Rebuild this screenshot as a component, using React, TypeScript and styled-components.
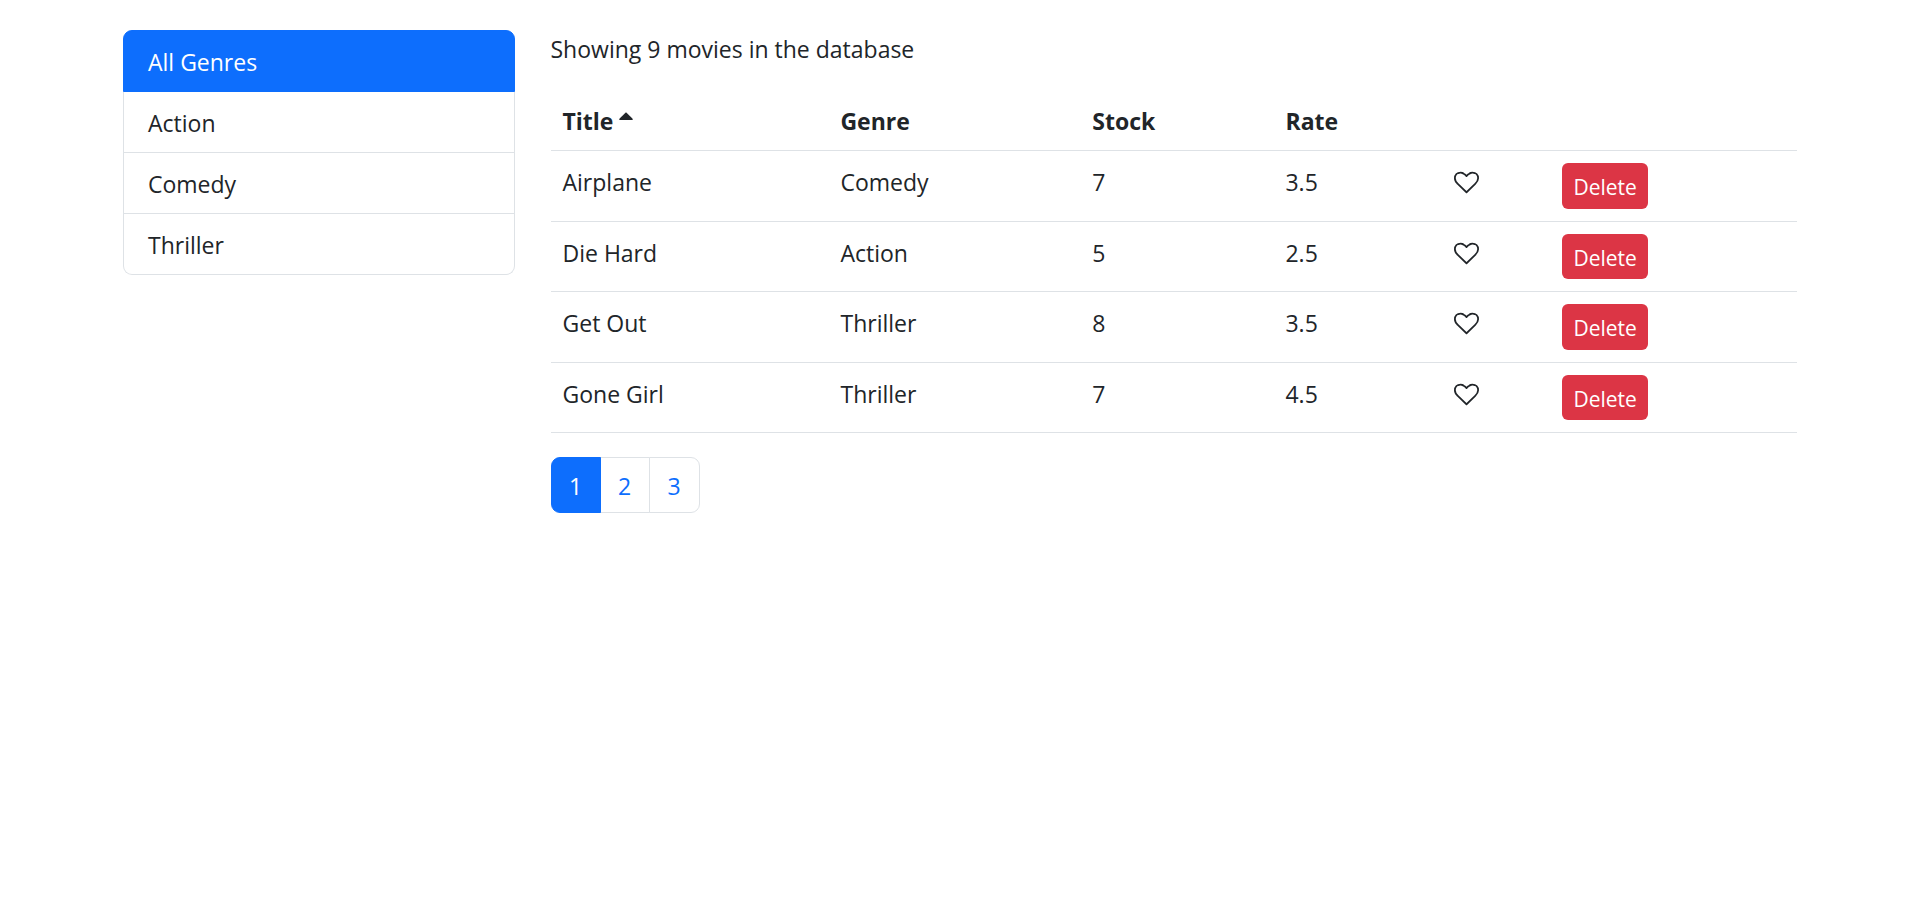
import React, { useState } from "react";
import styled, { createGlobalStyle } from "styled-components";

const GlobalStyle = createGlobalStyle`
  *, *::before, *::after { box-sizing: border-box; }
  body {
    margin: 0;
    background: #fff;
    color: #212529;
    font-family: "Segoe UI", "Open Sans", "Noto Sans", sans-serif;
    font-size: 23px;
    line-height: 38px;
  }
`;

const Container = styled.main`
  display: flex;
  max-width: 1710px;
  margin: 0 auto;
  padding-top: 30px;
`;

const Sidebar = styled.aside`
  flex: 0 0 25%;
  padding: 0 18px;
`;

const Content = styled.section`
  flex: 1;
  min-width: 0;
  padding: 0 18px;
`;

const GenreList = styled.ul`
  list-style: none;
  margin: 0;
  padding: 0;
`;

const GenreItem = styled.li``;

const GenreButton = styled.button<{ $active: boolean }>`
  display: block;
  width: 100%;
  padding: 12px 24px 10px;
  border: 1px solid ${(p) => (p.$active ? "#0d6efd" : "#dee2e6")};
  background: ${(p) => (p.$active ? "#0d6efd" : "#fff")};
  color: ${(p) => (p.$active ? "#fff" : "inherit")};
  font: inherit;
  text-align: left;
  cursor: pointer;

  ${GenreItem} + ${GenreItem} & { border-top: 0; }
  ${GenreItem}:first-child & { border-radius: 9px 9px 0 0; }
  ${GenreItem}:last-child & { border-radius: 0 0 9px 9px; }
`;

const Summary = styled.p`
  margin: 0 0 22px;
`;

const MovieTable = styled.table`
  width: 100%;
  margin-bottom: 24px;
  table-layout: fixed;
  border-collapse: separate;
  border-spacing: 0;
`;

const Column = styled.col<{ $width: string }>`
  width: ${(p) => p.$width};
`;

const HeaderCell = styled.th`
  padding: 12px 12px 10px;
  border-bottom: 1px solid #dee2e6;
  text-align: left;
  font-weight: 700;
  cursor: pointer;
`;

const Cell = styled.td`
  padding: 12px;
  border-bottom: 1px solid #dee2e6;
  vertical-align: top;
`;

const IconButton = styled.button`
  display: flex;
  align-items: center;
  height: 38px;
  padding: 0;
  border: 0;
  background: none;
  color: inherit;
  cursor: pointer;
`;

const DeleteButton = styled.button`
  display: block;
  width: 86px;
  height: 46px;
  padding: 2px 0 0;
  border: 0;
  border-radius: 6px;
  background: #dc3545;
  color: #fff;
  font: inherit;
  font-size: 21px;
  cursor: pointer;

  tr:nth-child(even) & { height: 45px; }
`;

const SortIcon = styled.svg`
  margin-left: 6px;
  vertical-align: 10px;
`;

const Pages = styled.ul`
  display: flex;
  list-style: none;
  margin: 0;
  padding: 0;
`;

const PageItem = styled.li`
  & + & { margin-left: -1px; }
`;

const PageLink = styled.a<{ $active: boolean }>`
  display: block;
  width: 50px;
  padding: 9px 0 7px;
  border: 1px solid ${(p) => (p.$active ? "#0d6efd" : "#dee2e6")};
  background: ${(p) => (p.$active ? "#0d6efd" : "#fff")};
  color: ${(p) => (p.$active ? "#fff" : "#0d6efd")};
  text-align: center;
  text-decoration: none;
  position: relative;
  z-index: ${(p) => (p.$active ? 1 : 0)};

  ${PageItem}:first-child & { border-radius: 9px 0 0 9px; }
  ${PageItem}:last-child & { width: 51px; border-radius: 0 9px 9px 0; }
`;

const HeartIcon = () => (
  <svg width="25" height="25" viewBox="0 0 1792 1792" fill="currentColor" aria-hidden="true">
    <path d="M1664 596q0-81-21.5-143t-55-98.5-81.5-59.5-94-31-98-8-112 25.5-110.5 64-86.5 72-60 61.5q-18 22-49 22t-49-22q-24-28-60-61.5t-86.5-72-110.5-64-112-25.5-98 8-94 31-81.5 59.5-55 98.5-21.5 143q0 168 187 355l581 560 580-559q188-188 188-356zm128 0q0 221-229 450l-623 600q-18 18-44 18t-44-18l-624-602q-10-8-27.5-26t-55.5-65.5-68-97.5-53.5-121-23.5-138q0-220 127-344t351-124q62 0 126.5 21.5t120 58 95.5 68.5 76 68q36-36 76-68t95.5-68.5 120-58 126.5-21.5q224 0 351 124t127 344z" />
  </svg>
);

const genres = ["All Genres", "Action", "Comedy", "Thriller"];
const columns = ["22.3%", "20.2%", "15.5%", "13.5%", "8.7%", "19.8%"];
const movies = [
  { title: "Airplane", genre: "Comedy", stock: 7, rate: 3.5 },
  { title: "Die Hard", genre: "Action", stock: 5, rate: 2.5 },
  { title: "Get Out", genre: "Thriller", stock: 8, rate: 3.5 },
  { title: "Gone Girl", genre: "Thriller", stock: 7, rate: 4.5 },
];

export default function App() {
  const [genre, setGenre] = useState("All Genres");
  const [page, setPage] = useState(1);

  return (
    <>
      <GlobalStyle />
      <Container>
        <Sidebar>
          <GenreList>
            {genres.map((name) => (
              <GenreItem key={name}>
                <GenreButton type="button" $active={name === genre} onClick={() => setGenre(name)}>
                  {name}
                </GenreButton>
              </GenreItem>
            ))}
          </GenreList>
        </Sidebar>
        <Content>
          <Summary>Showing 9 movies in the database</Summary>
          <MovieTable>
            <colgroup>
              {columns.map((width, i) => (
                <Column key={i} $width={width} />
              ))}
            </colgroup>
            <thead>
              <tr>
                <HeaderCell aria-sort="ascending">
                  Title
                  <SortIcon width="14" height="8" viewBox="0 0 14 8" fill="currentColor" aria-hidden="true">
                    <path d="M7 0.3 13.4 6.6Q14.2 8 13 8H1Q-0.2 8 0.6 6.6Z" />
                  </SortIcon>
                </HeaderCell>
                <HeaderCell>Genre</HeaderCell>
                <HeaderCell>Stock</HeaderCell>
                <HeaderCell>Rate</HeaderCell>
                <HeaderCell />
                <HeaderCell />
              </tr>
            </thead>
            <tbody>
              {movies.map((movie) => (
                <tr key={movie.title}>
                  <Cell>{movie.title}</Cell>
                  <Cell>{movie.genre}</Cell>
                  <Cell>{movie.stock}</Cell>
                  <Cell>{movie.rate}</Cell>
                  <Cell>
                    <IconButton type="button" aria-label={`Like ${movie.title}`}>
                      <HeartIcon />
                    </IconButton>
                  </Cell>
                  <Cell>
                    <DeleteButton type="button">Delete</DeleteButton>
                  </Cell>
                </tr>
              ))}
            </tbody>
          </MovieTable>
          <nav aria-label="Pages">
            <Pages>
              {[1, 2, 3].map((n) => (
                <PageItem key={n}>
                  <PageLink href={`#${n}`} $active={n === page} onClick={() => setPage(n)}>
                    {n}
                  </PageLink>
                </PageItem>
              ))}
            </Pages>
          </nav>
        </Content>
      </Container>
    </>
  );
}
